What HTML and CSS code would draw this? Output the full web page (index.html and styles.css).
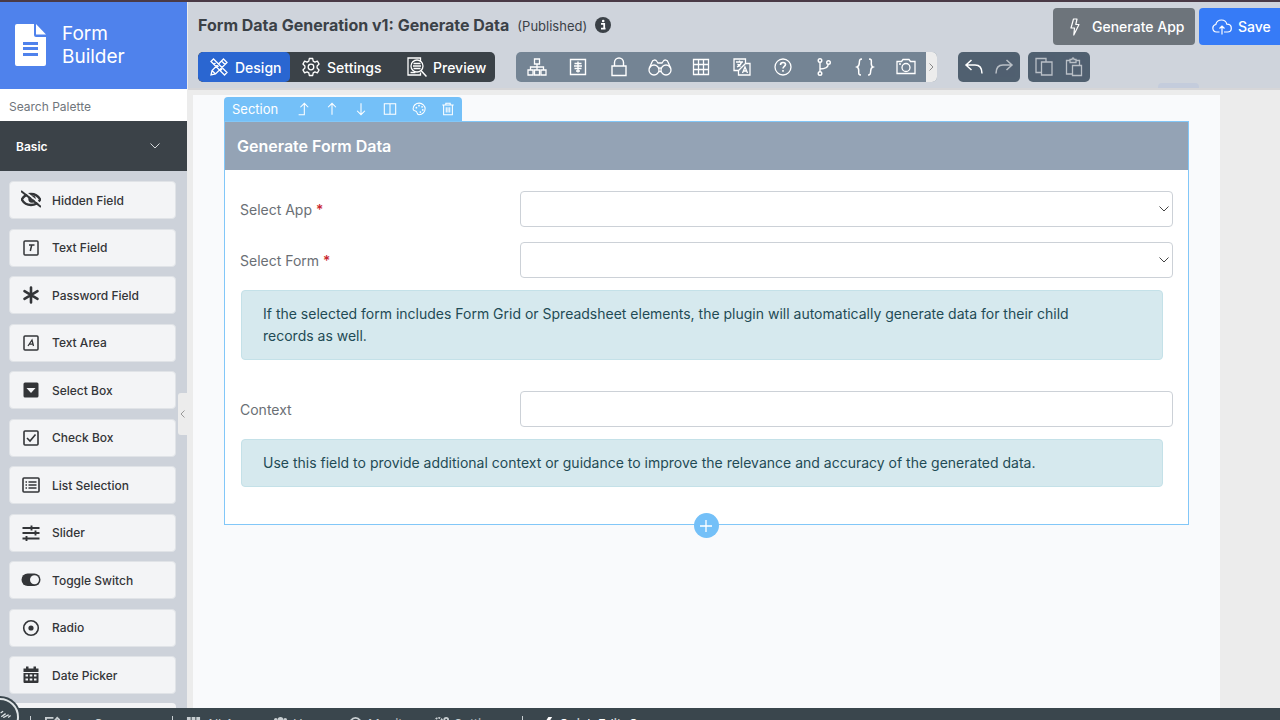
FILE: index.html
```html
<!DOCTYPE html>
<html lang="en">
<head>
    <meta charset="UTF-8">
    <meta name="viewport" content="width=device-width, initial-scale=1.0">
    <title>Form Builder</title>
    <link rel="stylesheet" href="styles.css">
</head>

<body>
    <div class="app">
        <aside class="sidebar">
            <a class="brand" href="#">
                <svg width="31" height="42" viewBox="0 0 31 42" fill="#fff"><path fill-rule="evenodd" d="M2 0h17v11a2 2 0 0 0 2 2h10v27a2 2 0 0 1-2 2H2a2 2 0 0 1-2-2V2a2 2 0 0 1 2-2zM8 18v3h15v-3zM8 23v3h15v-3zM8 29v3h15v-3z"/><path d="M21 0l10 10.500H21z"/></svg>
                <span>Form<br>Builder</span>
            </a>
            <input class="search" type="text" placeholder="Search Palette" aria-label="Search Palette">
            <button class="group-toggle">Basic
                <svg width="10" height="6" viewBox="0 0 10 6" fill="none" stroke="#d5d8db"><path d="M.5 .5L5 5 9.500 .5"/></svg>
            </button>
            <ul class="palette">
                <li><button><svg viewBox="0 0 20 20" fill="none" stroke="#333538" stroke-width="2.400"><path d="M.8 9.500C3 5.500 6 4 10 4s7 1.500 9.200 5.500C17 13.500 14 15 10 15S3 13.500 .8 9.500z"/><circle cx="11" cy="9" r="2.500"/><path stroke="#f3f4f6" stroke-width="1.800" d="M2.500 .5l18 14.400"/><path stroke-width="2" d="M0 1l20 16"/></svg>Hidden Field</button></li>
                <li><button><svg viewBox="0 0 20 20" fill="none" stroke="#333538" stroke-width="1.500"><rect x="3" y="3" width="14" height="14" rx="1"/><path d="M8 7h5.500M10.700 7l-1.400 6"/></svg>Text Field</button></li>
                <li><button><svg viewBox="0 0 20 20" stroke="#333538" stroke-width="2.600" stroke-linecap="round"><path d="M10 2.500v15M3.500 6.200l13 7.600M16.500 6.200l-13 7.600"/></svg>Password Field</button></li>
                <li><button><svg viewBox="0 0 20 20" fill="none" stroke="#333538" stroke-width="1.500"><rect x="3" y="3" width="14" height="14" rx="1"/><path stroke-width="1.300" d="M7 13l4-6 1.500 6M8.500 11.200H12"/></svg>Text Area</button></li>
                <li><button><svg viewBox="0 0 20 20"><rect x="2.500" y="2.500" width="15" height="15" rx="1.500" fill="#333538"/><path d="M5.500 8h9l-4.500 5z" fill="#f3f4f6"/></svg>Select Box</button></li>
                <li><button><svg viewBox="0 0 20 20" fill="none" stroke="#333538" stroke-width="1.600"><rect x="3" y="3" width="14" height="14" rx="1"/><path d="M6 10l3 3 5.500-6.500"/></svg>Check Box</button></li>
                <li><button><svg viewBox="0 0 20 20" fill="none" stroke="#333538" stroke-width="1.600"><rect x="2" y="3" width="16" height="14" rx="1"/><path d="M7.500 7h8M7.500 10h8M7.500 13h8"/><path d="M4.500 7H6M4.500 10H6M4.500 13H6"/></svg>List Selection</button></li>
                <li><button><svg viewBox="0 0 20 20" stroke="#333538" stroke-width="1.900"><path d="M1.500 5h17M1.500 10h17M1.500 15.500h17M10.500 2.500v5M14.500 7.500v5M5.500 13v5"/></svg>Slider</button></li>
                <li><button><svg viewBox="0 0 20 20"><rect x=".5" y="3.500" width="19" height="12.500" rx="6.200" fill="#333538"/><circle cx="13.500" cy="9.700" r="4.500" fill="#f3f4f6"/></svg>Toggle Switch</button></li>
                <li><button><svg viewBox="0 0 20 20"><circle cx="10" cy="10" r="7.300" fill="none" stroke="#333538" stroke-width="1.600"/><circle cx="10" cy="10" r="2.600" fill="#333538"/></svg>Radio</button></li>
                <li><button><svg viewBox="0 0 20 20" fill="#333538"><path fill-rule="evenodd" d="M5 1.500h2.500v2h5v-2H15v2h2.500v3.500h-15V3.500H5zM2.500 8h15v9a1 1 0 0 1-1 1h-13a1 1 0 0 1-1-1zM4.500 9.500v2h2.500v-2zM8.700 9.500v2h2.600v-2zM13 9.500v2h2.500v-2zM4.500 13.500v2h2.500v-2zM8.700 13.500v2h2.600v-2zM13 13.500v2h2.500v-2z"/></svg>Date Picker</button></li>
            </ul>
            <div class="palette-next"></div>
            <button class="collapse" aria-label="Collapse palette"><svg width="5" height="8" viewBox="0 0 5 8" fill="none" stroke="#999"><path d="M4.500 .5L1 4l3.500 3.500"/></svg></button>
        </aside>

        <main class="main">
            <header class="header">
                <div class="title-row">
                    <h1>Form Data Generation v1: Generate Data</h1>
                    <span class="status">(Published)</span>
                    <svg width="16" height="16" viewBox="0 0 16 16"><circle cx="8" cy="8" r="8" fill="#3b4147"/><path d="M6 6.800h3.200v4.400M6 11.700h4.500" stroke="#fff" stroke-width="1.800" fill="none"/><circle cx="8.200" cy="4" r="1.300" fill="#fff"/></svg>
                    <div class="actions">
                        <button class="btn-generate"><svg width="10" height="18" viewBox="0 0 10 18" fill="none" stroke="#fff" stroke-width="1.200" stroke-linejoin="round"><path d="M3.500 1H7L5.800 6.500H9L3.800 17l.7-7H1z"/></svg>Generate App</button>
                        <button class="btn-save"><svg width="20" height="16" viewBox="0 0 20 16" fill="none" stroke="#fff" stroke-width="1.200"><path d="M7.500 13H4.500a3.800 3.800 0 0 1-.7-7.500C4.500 2.500 7 1 9.500 1c2.700 0 4.800 1.700 5.300 4.200 2.500 0 4.500 1.500 4.500 4S17.500 13 15.500 13H12M10 15.500V7M7.500 9.500L10 7l2.500 2.500"/></svg>Save</button>
                    </div>
                </div>
                <div class="tool-row">
                    <nav class="modes">
                        <button class="active"><svg viewBox="0 0 20 20" fill="none" stroke="#fff" stroke-width="1.300"><path d="M2 4.500L4.500 2 18 15.500 15.500 18zM5 7.500l1.500-1.500M8 10.500l1.500-1.500M11.500 13.500l1.500-1.500M14.500 2l3.500 3.500L6.500 17 2 18l1-4.500zM12.500 4l3.500 3.500M3 13.500L6.500 17"/></svg>Design</button>
                        <button><svg viewBox="0 0 20 20" fill="none" stroke="#fff" stroke-width="1.300" stroke-linejoin="round"><path d="M8.300 1.500h3.400l.5 2.600 1.700 1 2.500-.9 1.700 2.900-2 1.800v2.200l2 1.800-1.700 2.900-2.500-.9-1.700 1-.5 2.600H8.300l-.5-2.600-1.700-1-2.500.9-1.700-2.900 2-1.800V8.900l-2-1.800 1.700-2.900 2.500.9 1.700-1z"/><circle cx="10" cy="10" r="2.800"/></svg>Settings</button>
                        <button><svg viewBox="0 0 20 20" fill="none" stroke="#fff" stroke-width="1.300"><path d="M13.500 4V1H1v17h12.500v-2.500"/><circle cx="10" cy="9" r="6"/><path stroke-width="1.500" d="M14 13.500l5.500 6"/><path d="M6.500 6.500h7M6 9h8M6.500 11.500h7M3.500 15.500h5"/></svg>Preview</button>
                    </nav>
                    <div class="tools">
                        <button aria-label="Sitemap"><svg viewBox="0 0 20 20" fill="none" stroke="#fff" stroke-width="1.300"><path d="M7.500 2h5v5h-5zM1 13h5v5H1zM7.500 13h5v5h-5zM14 13h5v5h-5zM10 7v6M3.500 13v-3h13v3"/></svg></button>
                        <button aria-label="Data"><svg viewBox="0 0 20 20" fill="none" stroke="#fff" stroke-width="1.400"><path d="M2.500 2.500h15v15h-15zM10 4.500v11M6.500 6.500h7M6 9h8M6.500 11.500h7M8 14h4"/></svg></button>
                        <button aria-label="Permission"><svg viewBox="0 0 20 20" fill="none" stroke="#fff" stroke-width="1.400"><path d="M3 9h14v9.500H3zM5.500 9V5.500a4.500 4.500 0 0 1 9 0V9"/></svg></button>
                        <button aria-label="Find"><svg class="wide" viewBox="0 0 24 20" fill="none" stroke="#fff" stroke-width="1.300"><circle cx="6" cy="13" r="5"/><circle cx="18" cy="13" r="5"/><path d="M1.200 11.500L4 5c.5-2 3.500-3 5-.5L10 6h4l1-1.500c1.500-2.500 4.500-1.500 5 .5l2.800 6.500M10.800 11.500c.7-.9 1.700-.9 2.400 0M11 14.500h2"/></svg></button>
                        <button aria-label="Grid"><svg viewBox="0 0 20 20" fill="none" stroke="#fff" stroke-width="1.300"><path d="M2.500 2.500h15v15h-15zM7.500 2.500v15M12.500 2.500v15M2.500 7.500h15M2.500 12.500h15"/></svg></button>
                        <button aria-label="Translate"><svg viewBox="0 0 20 20" fill="none" stroke="#fff" stroke-width="1.300"><path d="M6.500 13.500H2V2h11.500v4.500H18V18H6.500zM13.500 6.500l-7 7M4 5h7M7.500 3.500V5M5 10c2.500-1 4-2.500 4.500-5M5.500 7l3 2.500M10.500 16l2.500-6 2.500 6M11.500 14h3"/></svg></button>
                        <button aria-label="Help"><svg viewBox="0 0 20 20" fill="none" stroke="#fff" stroke-width="1.300"><circle cx="10" cy="10" r="8"/><path stroke-width="1.600" d="M7.500 8c0-3.500 5-3 5-.5 0 1.700-2.500 2-2.500 4M10 13v1.700"/></svg></button>
                        <button aria-label="Branch"><svg viewBox="0 0 20 20" fill="none" stroke="#fff" stroke-width="1.400"><circle cx="6" cy="3.500" r="1.800"/><circle cx="6" cy="16.500" r="1.800"/><circle cx="14.500" cy="5.500" r="1.800"/><path d="M6 5.300v9.400M6 12c5 0 8-1 8.300-4.700"/></svg></button>
                        <button aria-label="Code"><svg viewBox="0 0 20 20" fill="none" stroke="#fff" stroke-width="1.500"><path d="M7 2C4.500 2 4.500 3 4.300 6c-.1 2.500-.8 3.500-2.300 4 1.500.5 1.800 1.500 1.700 4-.1 3 0 4 2.300 4M14 2c2.500 0 2.500 1 2.300 4-.1 2.500.2 3.500 1.700 4-1.500.5-2.200 1.500-2.300 4-.2 3-.4 4-2.700 4"/></svg></button>
                        <button aria-label="Screenshot"><svg viewBox="0 0 20 20" fill="none" stroke="#fff" stroke-width="1.300"><path d="M1 4.500h4.500L7 2.500h6l1.500 2H19v12H1z"/><circle cx="10" cy="10.500" r="4"/><path d="M3 7h2"/></svg></button>
                        <button class="more" aria-label="More"><svg viewBox="0 0 5 8" fill="none" stroke="#888"><path d="M.5 .5L4 4 .5 7.500"/></svg></button>
                    </div>
                    <div class="edit">
                        <button aria-label="Undo"><svg viewBox="0 0 20 20" fill="none" stroke="#fff" stroke-width="1.500"><path d="M7.500 3L2 8l5.500 5M2 8h9c4.500 0 7 2.500 7 8.500"/></svg></button>
                        <button class="dim" aria-label="Redo"><svg viewBox="0 0 20 20" fill="none" stroke="#fff" stroke-width="1.500"><path d="M12.500 3L18 8l-5.500 5M18 8H9c-4.500 0-7 2.500-7 8.500"/></svg></button>
                    </div>
                    <div class="edit">
                        <button class="dim" aria-label="Copy"><svg viewBox="0 0 20 20" fill="none" stroke="#fff" stroke-width="1.300"><path d="M7 15.500H2v-14h10V5M7.500 5H18v13H7.500z"/></svg></button>
                        <button class="dim" aria-label="Paste"><svg viewBox="0 0 20 20" fill="none" stroke="#fff" stroke-width="1.300"><path d="M8 17H2.500V3.500H6M12 3.500h3.500V8M6 5.500v-3h2c0-2 2-2 2 0h2v3zM8.500 8.500H17.500v10h-9z"/></svg></button>
                    </div>
                    <span class="tab-hint"></span>
                </div>
            </header>

            <div class="workspace">
                <div class="canvas">
                    <div class="section-bar">
                        <span>Section</span>
                        <button aria-label="Move to top"><svg viewBox="0 0 16 16" fill="none" stroke="#fff" stroke-width="1.200"><path d="M3 14.500h6.500v-13M5 6l4.500-4.500L14 6"/></svg></button>
                        <button aria-label="Move up"><svg viewBox="0 0 16 16" fill="none" stroke="#fff" stroke-width="1.200"><path d="M8 14.500v-13M3.500 6L8 1.500 12.500 6"/></svg></button>
                        <button aria-label="Move down"><svg viewBox="0 0 16 16" fill="none" stroke="#fff" stroke-width="1.200"><path d="M8 1.500v13M3.500 10L8 14.500l4.500-4.500"/></svg></button>
                        <button aria-label="Columns"><svg viewBox="0 0 16 16" fill="none" stroke="#fff" stroke-width="1.200"><path d="M1.500 2h13v12h-13zM8 2v12"/></svg></button>
                        <button aria-label="Style"><svg viewBox="0 0 16 16" fill="none" stroke="#fff" stroke-width="1.200"><path d="M8 14.500c-3 0-1.500-3.500-3.500-4S1.200 10 1.200 8C1.200 4 4.500 1.300 8.200 1.300S15 4.200 15 7.800s-3 6.700-7 6.700z"/><g fill="#fff" stroke="none"><circle cx="5" cy="6.500" r="1"/><circle cx="8" cy="4.200" r="1"/><circle cx="11.500" cy="5.500" r="1"/><circle cx="12.300" cy="9" r="1"/><circle cx="9.500" cy="11.500" r="1"/></g></svg></button>
                        <button aria-label="Delete"><svg viewBox="0 0 16 16" fill="none" stroke="#fff" stroke-width="1.200"><path d="M1.500 3.500h13M5.500 3.500v-2h5v2M3 3.500v11h10v-11M6 6v6M8 6v6M10 6v6"/></svg></button>
                    </div>
                    <section class="section">
                        <h2>Generate Form Data</h2>
                        <div class="fields">
                            <div class="field">
                                <label for="app">Select App <b>*</b></label>
                                <select id="app"><option></option></select>
                            </div>
                            <div class="field">
                                <label for="form">Select Form <b>*</b></label>
                                <select id="form"><option></option></select>
                            </div>
                            <p class="info">If the selected form includes Form Grid or Spreadsheet elements, the plugin will automatically generate data for their child records as well.</p>
                            <div class="field context">
                                <label for="context">Context</label>
                                <input id="context" type="text">
                            </div>
                            <p class="info">Use this field to provide additional context or guidance to improve the relevance and accuracy of the generated data.</p>
                        </div>
                        <button class="add" aria-label="Add section"><svg width="12" height="12" viewBox="0 0 12 12" stroke="#fff" stroke-width="1.300"><path d="M6 0v12M0 6h12"/></svg></button>
                    </section>
                </div>
            </div>
        </main>

        <footer class="admin-bar">
            <span class="avatar"><svg width="24" height="24" viewBox="0 0 24 24" fill="none" stroke="#dfe4e6" stroke-width="2"><path d="M1 8l4-3M2 14l7-5M5 15c3 0 5-3 9-4M13 15l4-3"/></svg></span>
            <a class="app-center" href="#"><svg viewBox="0 0 16 16" fill="none" stroke="#c9cfd2" stroke-width="2"><path d="M9 2H1v13h12V8M6 10l7-8 2 2-7 7z"/></svg>App Composer</a>
            <a class="all-apps" href="#"><svg viewBox="0 0 16 16" fill="#c9cfd2"><path d="M1 1h4v4H1zM6 1h4v4H6zM11 1h4v4h-4zM1 6h4v4H1zM6 6h4v4H6zM11 6h4v4h-4z"/></svg>All Apps</a>
            <a class="users" href="#"><svg viewBox="0 0 16 16" fill="#c9cfd2"><circle cx="8" cy="4" r="3"/><circle cx="3" cy="4" r="2"/><circle cx="13" cy="4" r="2"/><path d="M1 14V8h14v6z"/></svg>Users</a>
            <a class="monitor" href="#"><svg viewBox="0 0 16 16" fill="none" stroke="#c9cfd2" stroke-width="2"><path d="M1 8c4-8 10-8 14 0-4 8-10 8-14 0z"/><circle cx="8" cy="8" r="2"/></svg>Monitor</a>
            <a class="settings" href="#"><svg viewBox="0 0 16 16" fill="none" stroke="#c9cfd2" stroke-width="2"><circle cx="5" cy="6" r="4" stroke-dasharray="2 1"/><circle cx="13" cy="4" r="2"/></svg>Settings</a>
            <label class="quick"><svg viewBox="0 0 16 16" fill="#fff"><path d="M10 1h4l-3 5h3L6 15l2-6H5z"/></svg>Quick Edit: On</label>
        </footer>
    </div>
</body>

</html>
```
FILE: styles.css
```css
* {
    box-sizing: border-box;
}

body {
    margin: 0;
    font-family: Inter, 'Liberation Sans', sans-serif;
    color: #3b4147;
    background: #ececec;
}

button,
input,
select {
    font-family: inherit;
}

button {
    border: none;
    padding: 0;
    background: none;
    cursor: pointer;
}

svg {
    display: block;
    flex: none;
}

.app {
    height: 100vh;
    display: grid;
    grid-template-columns: 187px 1fr;
    grid-template-rows: 1fr 12px;
    border-top: 2px solid #4a3a46;
    overflow: hidden;
}

/* sidebar */
.sidebar {
    position: relative;
    display: flex;
    flex-direction: column;
    min-height: 0;
    background: #cdd2da;
}

.brand {
    height: 87px;
    display: flex;
    align-items: center;
    gap: 16px;
    padding: 0 0 1px 15px;
    background: #4f82ec;
    color: #fff;
    font-size: 19px;
    line-height: 23px;
    text-decoration: none;
}

.search {
    height: 32px;
    border: none;
    padding: 2px 9px 0;
    font-size: 12px;
    background: #fff;
}

.search::placeholder {
    color: #6f757b;
}

.group-toggle {
    height: 50px;
    display: flex;
    align-items: center;
    justify-content: space-between;
    padding: 0 27px 0 16px;
    background: #3b4248;
    color: #fff;
    font-size: 12px;
    font-weight: 600;
}

.palette {
    flex: 1;
    display: flex;
    flex-direction: column;
    justify-content: space-between;
    list-style: none;
    margin: 0;
    padding: 10px 11px 9px 9px;
}

.palette button {
    width: 100%;
    height: 38px;
    display: flex;
    align-items: center;
    gap: 11px;
    padding-left: 11px;
    border: 1px solid #e0e3e7;
    border-radius: 4px;
    background: #f3f4f6;
    color: #333538;
    font-size: 12px;
    font-weight: 500;
}

.palette svg {
    width: 20px;
    height: 20px;
}

.palette-next {
    height: 5px;
    margin: 0 11px 0 9px;
    border-radius: 4px 4px 0 0;
    background: #f3f4f6;
}

.collapse {
    position: absolute;
    right: 0;
    top: 391px;
    width: 9px;
    height: 42px;
    display: flex;
    align-items: center;
    justify-content: center;
    border-radius: 3px 0 0 3px;
    background: #ececec;
}

/* header */
.main {
    display: flex;
    flex-direction: column;
    min-width: 0;
}

.header {
    height: 88px;
    margin-left: 1px;
    padding: 6px 0 0 10px;
    background: #cfd4dc;
    border-bottom: 2px solid #d6d6d8;
}

.title-row {
    display: flex;
    align-items: flex-start;
}

h1 {
    margin: 6px 8px 0 0;
    font-size: 16px;
    line-height: 22px;
    font-weight: 700;
}

.status {
    margin: 7px 8px 0 0;
    font-size: 13px;
    line-height: 22px;
}

.title-row > svg {
    margin-top: 9px;
}

.actions {
    display: flex;
    gap: 4px;
    margin-left: auto;
}

.actions button {
    height: 37px;
    display: flex;
    align-items: center;
    color: #fff;
    font-size: 14px;
    font-weight: 500;
}

.btn-generate {
    width: 142px;
    gap: 12px;
    padding-left: 17px;
    border-radius: 4px;
    background: #6d747b;
}

.btn-save {
    width: 81px;
    gap: 6px;
    padding-left: 13px;
    border-radius: 4px 0 0 4px;
    background: #367bf7;
}

.tool-row {
    display: flex;
    margin-top: 7px;
}

.modes,
.tools,
.edit {
    height: 30px;
    display: flex;
    border-radius: 5px;
    overflow: hidden;
}

.modes {
    width: 297px;
    margin-right: 21px;
    background: #3b4248;
}

.modes button {
    display: flex;
    align-items: center;
    gap: 6px;
    padding-left: 11px;
    color: #fff;
    font-size: 14px;
    font-weight: 500;
}

.modes button:nth-child(2) {
    width: 106px;
}

.modes .active {
    width: 92px;
    background: #2a66d1;
    border-radius: 5px;
}

.modes svg,
.tools svg,
.edit svg {
    width: 20px;
    height: 20px;
}

.tools {
    margin-right: 21px;
    background: #748494;
}

.tools button {
    width: 41px;
    display: flex;
    align-items: center;
    justify-content: center;
}

.tools .wide {
    width: 24px;
}

.tools .more {
    width: 11px;
    background: #ececec;
}

.tools .more svg {
    width: 5px;
    height: 8px;
}

.edit {
    width: 62px;
    margin-right: 8px;
    background: #506070;
    justify-content: center;
    gap: 10px;
    align-items: center;
}

.dim {
    opacity: .6;
}

.tab-hint {
    width: 41px;
    height: 5px;
    margin: 31px 0 0 60px;
    border-radius: 4px 4px 0 0;
    background: #c4ccdc;
}

/* canvas */
.workspace {
    flex: 1;
    padding: 5px 60px 0 6px;
}

.canvas {
    height: 100%;
    padding: 2px 31px 0;
    background: #f9fafc;
}

.section-bar {
    width: 238px;
    height: 24px;
    display: flex;
    align-items: center;
    justify-content: flex-end;
    gap: 15px;
    padding: 0 7px 0 8px;
    border-radius: 4px 4px 0 0;
    background: #74c0f8;
    color: #fff;
    font-size: 13px;
}

.section-bar span {
    margin-right: auto;
}

.section-bar svg {
    width: 14px;
    height: 14px;
}

.section {
    position: relative;
    border: 1px solid #82c7f8;
    background: #fff;
}

h2 {
    margin: 0;
    padding: 0 12px;
    font-size: 16px;
    line-height: 48px;
    font-weight: 600;
    color: #fff;
    background: #94a3b5;
}

.fields {
    padding: 21px 15px 37px;
}

.field {
    display: flex;
    align-items: center;
    margin-bottom: 15px;
    font-size: 14px;
    color: #6a6f75;
}

.field label {
    width: 280px;
}

.field b {
    font-weight: 500;
    color: #c9252d;
}

.field select,
.field input {
    flex: 1;
    min-width: 0;
    height: 36px;
    padding: 0 8px;
    border: 1px solid #ccd1d7;
    border-radius: 4px;
    background: #fff;
    font-size: 14px;
}

.field select {
    appearance: none;
    background: #fff url("data:image/svg+xml,%3Csvg xmlns='http://www.w3.org/2000/svg' width='10' height='6' fill='none' stroke='%23444'%3E%3Cpath d='M.5.5L5 5 9.500.5'/%3E%3C/svg%3E") no-repeat right 3px center;
}

.info {
    margin: -3px 10px 0 1px;
    padding: 12px 50px 12px 21px;
    border: 1px solid #c4e1e8;
    border-radius: 4px;
    background: #d6e9ee;
    color: #1f4b55;
    font-size: 14px;
    line-height: 22px;
}

.context {
    margin-top: 31px;
}

.add {
    position: absolute;
    left: 50%;
    bottom: -14px;
    width: 25px;
    height: 25px;
    margin-left: -13px;
    display: flex;
    align-items: center;
    justify-content: center;
    border-radius: 50%;
    background: #74c0f8;
}

/* admin bar, only its top edge shows */
.admin-bar {
    position: relative;
    grid-column: 1 / -1;
    display: flex;
    align-items: flex-start;
    padding: 8px 0 0 30px;
    background: #3a464d;
}

.admin-bar a,
.admin-bar label {
    display: flex;
    gap: 5px;
    color: #c9cfd2;
    font-size: 13px;
    line-height: 16px;
    white-space: nowrap;
    text-decoration: none;
}

.admin-bar svg {
    width: 15px;
    height: 15px;
}

.avatar {
    position: absolute;
    left: -19px;
    top: -10px;
    width: 38px;
    height: 38px;
    padding: 8px 0 0 17px;
    border: 2px solid #dfe4e6;
    border-radius: 50%;
    background: #3a464d;
    box-shadow: 0 0 0 2px #3a464d;
}

.app-center {
    width: 142px;
    padding-left: 14px;
    border-left: 1px solid #c9cfd2;
}

.all-apps {
    width: 101px;
    padding-left: 13px;
    border-left: 1px solid #c9cfd2;
}

.users {
    width: 75px;
}

.monitor {
    width: 86px;
}

.settings {
    width: 88px;
}

.admin-bar .quick {
    padding-left: 16px;
    border-left: 1px solid #c9cfd2;
    color: #fff;
}
```
